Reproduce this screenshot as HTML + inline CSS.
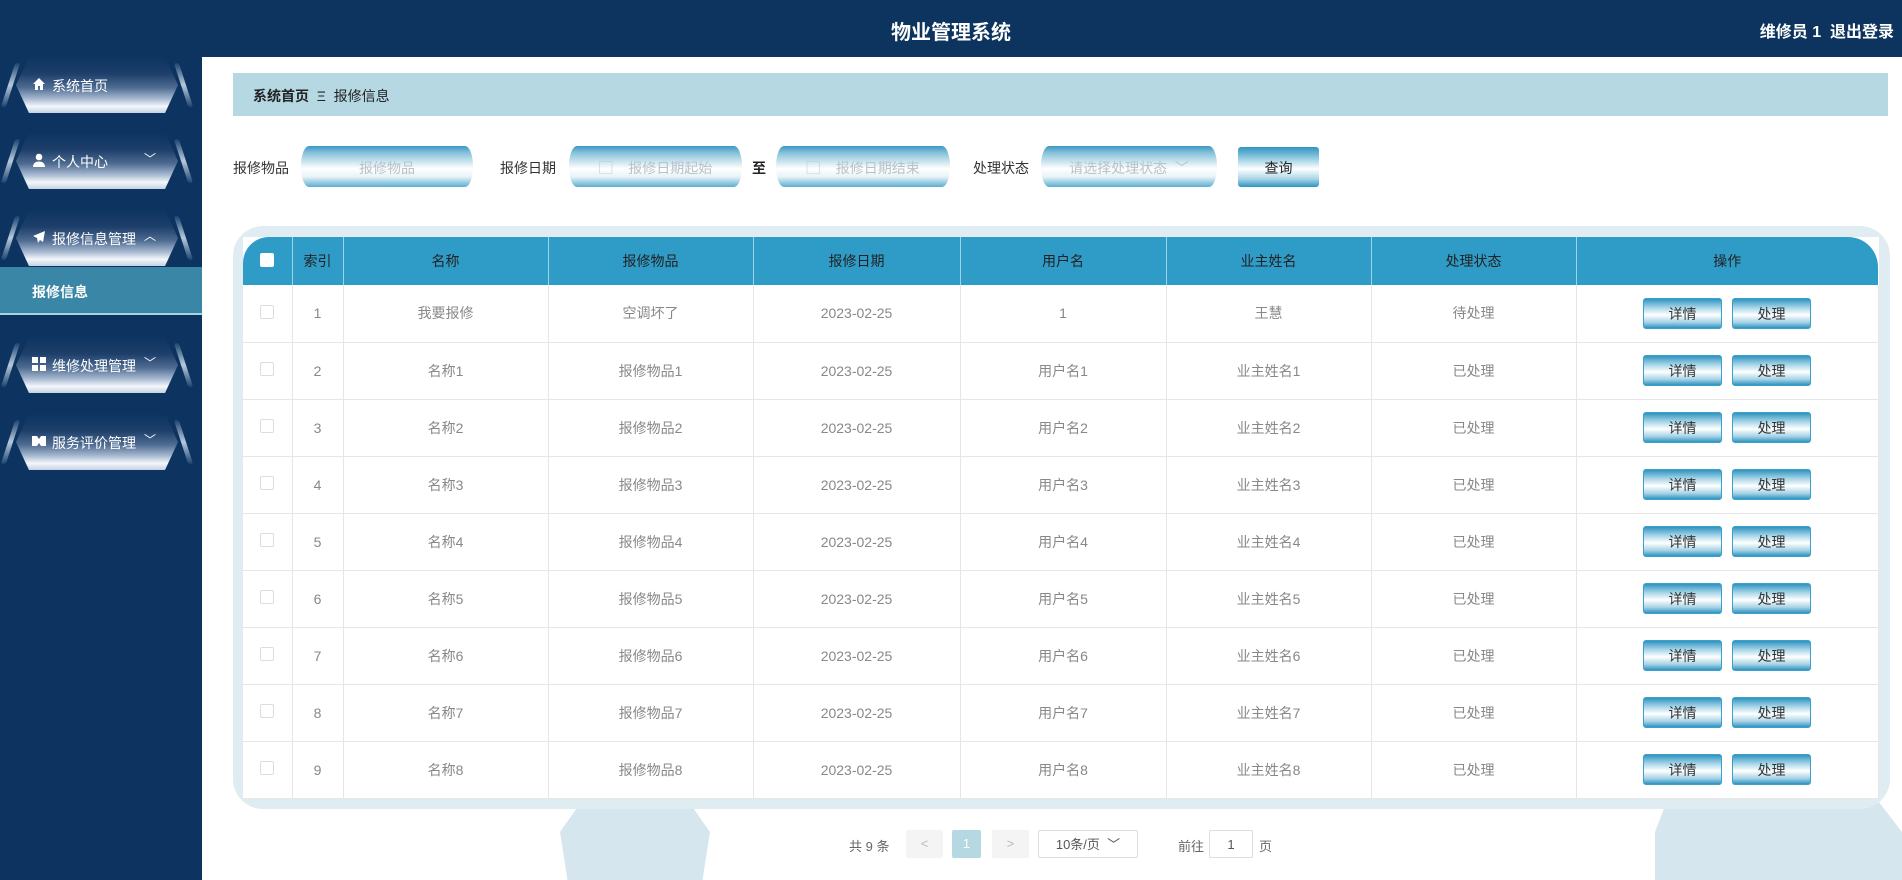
<!DOCTYPE html>
<html><head><meta charset="utf-8">
<style>
*{margin:0;padding:0;box-sizing:border-box}
body{width:1902px;height:880px;overflow:hidden;background:#fff;font-family:"Liberation Sans","Noto Sans CJK SC",sans-serif;position:relative}
.hdr{position:absolute;left:0;top:0;width:1902px;height:57px;background:#0c345e}
.hdr .t{position:absolute;left:0;width:1902px;top:16px;text-align:center;color:#fff;font-weight:bold;font-size:20px}
.hdr .r{position:absolute;right:8px;top:18px;color:#fff;font-weight:bold;font-size:16px}
.side{position:absolute;left:0;top:57px;width:202px;height:823px;background:#0d3461}
.mi{position:absolute;left:6px;width:182px;height:56px}
.mi .b{position:absolute;left:10px;top:0;width:162px;height:56px;clip-path:polygon(8% 0,92% 0,100% 50%,92% 100%,8% 100%,0 50%);background:linear-gradient(180deg,#0d3461 0%,#1d3f6a 30%,#4f6c92 55%,#a9bbd2 75%,#f4f7fb 88%,#c4d2e2 100%)}
.mi .l,.mi .rr{position:absolute;top:6px;width:5px;height:44px;border-radius:3px;background:linear-gradient(180deg,#1d4470,#b8c9dc,#1d4470)}
.mi .l{left:2px;transform:skewX(-18deg)}
.mi .rr{right:2px;transform:skewX(18deg)}
.mi .tx{position:absolute;left:46px;top:19px;color:#fff;font-size:14px}
.mi .ic{position:absolute;left:26px;top:20px;width:14px;height:14px}
.mi .ar{position:absolute;right:32px;top:17px;color:#fff;font-size:12px}
.sub{position:absolute;left:0;top:210px;width:202px;height:48px;background:#3a86a6;border-bottom:2px solid #a9d2e2;color:#fff;font-size:14px;font-weight:bold;padding:15px 0 0 32px}
.bg1{position:absolute;background:#d6e6ee}
.bc{position:absolute;left:233px;top:73px;width:1655px;height:43px;background:#b5d8e2;font-size:14px;padding:13px 0 0 20px;color:#222}
.lab{position:absolute;top:158px;font-size:14px;color:#333}
.inp{position:absolute;top:146px;height:41px;border-radius:8px/20px;background:linear-gradient(180deg,#3a98c4 0%,#8cc4dc 18%,#ffffff 55%,#e8f3f8 75%,#5aaed0 100%);color:#b9c2c8;font-size:14px;text-align:center;padding-top:12px}
.btnq{position:absolute;left:1238px;top:147px;width:81px;height:40px;border-radius:3px;background:linear-gradient(180deg,#2f93c0 0%,#9cd0e4 30%,#fff 55%,#a8d4e6 80%,#2f93c0 100%);font-size:14px;text-align:center;padding-top:11px;color:#222}
.tw{position:absolute;left:233px;top:226px;width:1657px;height:583px;border-radius:30px;background:#dfecf2}
table{position:absolute;left:243px;top:237px;border-collapse:collapse;table-layout:fixed;width:1635px;background:#fff}
th{height:48px;background:#2f9cc8;color:#222;font-weight:normal;font-size:14px;border-right:1px solid #9fd2e6}
td{height:57px;text-align:center;color:#888;font-size:14px;border-right:1px solid #e6e6e6;border-bottom:1px solid #e6e6e6}
.cb{display:inline-block;width:14px;height:14px;border:1px solid #ddd;border-radius:2px;background:#fff}
.ob{display:inline-block;width:79px;height:31px;margin:0 5px;border-radius:3px;background:linear-gradient(180deg,#2f93c0 0%,#a8d6e8 30%,#fff 55%,#a8d4e6 80%,#2f93c0 100%);color:#333;font-size:14px;line-height:31px;border:1px solid #3aa0cc}
.pg{position:absolute;top:830px;font-size:13px;color:#666}
.pb{position:absolute;top:830px;height:28px;border-radius:2px;font-size:13px;text-align:center;line-height:28px}
</style></head><body>
<div class="bg1" style="left:560px;top:800px;width:150px;height:80px;clip-path:polygon(15% 0,85% 0,100% 40%,95% 100%,5% 100%,0 40%)"></div>
<div class="bg1" style="left:1655px;top:800px;width:247px;height:80px;clip-path:polygon(5% 0,90% 0,100% 40%,100% 100%,0 100%,0 40%)"></div>
<div class="hdr"><div class="t">物业管理系统</div><div class="r">维修员 1&nbsp; 退出登录</div></div>
<div class="side">
<div class="mi" style="top:0"><div class="b"></div><div class="l"></div><div class="rr"></div>
<svg class="ic" viewBox="0 0 14 14"><path d="M7 1L1 7h2v6h3V9h2v4h3V7h2z" fill="#fff"/></svg><div class="tx">系统首页</div></div>
<div class="mi" style="top:76px"><div class="b"></div><div class="l"></div><div class="rr"></div>
<svg class="ic" viewBox="0 0 14 14"><circle cx="7" cy="4" r="3.3" fill="#fff"/><path d="M1 14c0-4 3-5.5 6-5.5s6 1.5 6 5.5z" fill="#fff"/></svg><div class="tx">个人中心</div><div class="ar">﹀</div></div>
<div class="mi" style="top:153px"><div class="b"></div><div class="l"></div><div class="rr"></div>
<svg class="ic" viewBox="0 0 14 14"><path d="M13 1L1 6l4 2 1 5 2-3 3 2z" fill="#fff"/></svg><div class="tx">报修信息管理</div><div class="ar">︿</div></div>
<div class="sub">报修信息</div>
<div class="mi" style="top:280px"><div class="b"></div><div class="l"></div><div class="rr"></div>
<svg class="ic" viewBox="0 0 14 14"><rect x="0" y="0" width="6" height="6" fill="#fff"/><rect x="8" y="0" width="6" height="6" fill="#fff"/><rect x="0" y="8" width="6" height="6" fill="#fff"/><rect x="8" y="8" width="6" height="6" fill="#fff"/></svg><div class="tx">维修处理管理</div><div class="ar">﹀</div></div>
<div class="mi" style="top:357px"><div class="b"></div><div class="l"></div><div class="rr"></div>
<svg class="ic" viewBox="0 0 14 14"><path d="M0 2h5l2 3 2-3h5v10H9L7 9l-2 3H0z" fill="#fff"/></svg><div class="tx">服务评价管理</div><div class="ar">﹀</div></div>
</div>
<div class="bc"><b>系统首页</b>&nbsp; Ξ&nbsp; 报修信息</div>
<div class="lab" style="left:233px">报修物品</div>
<div class="inp" style="left:301px;width:172px">报修物品</div>
<div class="lab" style="left:500px">报修日期</div>
<div class="inp" style="left:569px;width:173px">▢ &nbsp;&nbsp;&nbsp;报修日期起始</div>
<div class="lab" style="left:752px;font-weight:bold;color:#222">至</div>
<div class="inp" style="left:776px;width:174px">▢ &nbsp;&nbsp;&nbsp;报修日期结束</div>
<div class="lab" style="left:973px">处理状态</div>
<div class="inp" style="left:1041px;width:176px">请选择处理状态 &nbsp;﹀</div>
<div class="btnq">查询</div>
<div class="tw"></div>
<table>
<colgroup><col style="width:49px"><col style="width:51px"><col style="width:205px"><col style="width:205px"><col style="width:207px"><col style="width:206px"><col style="width:205px"><col style="width:205px"><col style="width:302px"></colgroup>
<tr><th style="border-top-left-radius:26px"><span class="cb" style="border:none"></span></th><th>索引</th><th>名称</th><th>报修物品</th><th>报修日期</th><th>用户名</th><th>业主姓名</th><th>处理状态</th><th style="border-top-right-radius:30px;border-right:none">操作</th></tr>
<tr><td><span class="cb"></span></td><td>1</td><td>我要报修</td><td>空调坏了</td><td>2023-02-25</td><td>1</td><td>王慧</td><td>待处理</td><td><span class="ob">详情</span><span class="ob">处理</span></td></tr>
<tr><td><span class="cb"></span></td><td>2</td><td>名称1</td><td>报修物品1</td><td>2023-02-25</td><td>用户名1</td><td>业主姓名1</td><td>已处理</td><td><span class="ob">详情</span><span class="ob">处理</span></td></tr>
<tr><td><span class="cb"></span></td><td>3</td><td>名称2</td><td>报修物品2</td><td>2023-02-25</td><td>用户名2</td><td>业主姓名2</td><td>已处理</td><td><span class="ob">详情</span><span class="ob">处理</span></td></tr>
<tr><td><span class="cb"></span></td><td>4</td><td>名称3</td><td>报修物品3</td><td>2023-02-25</td><td>用户名3</td><td>业主姓名3</td><td>已处理</td><td><span class="ob">详情</span><span class="ob">处理</span></td></tr>
<tr><td><span class="cb"></span></td><td>5</td><td>名称4</td><td>报修物品4</td><td>2023-02-25</td><td>用户名4</td><td>业主姓名4</td><td>已处理</td><td><span class="ob">详情</span><span class="ob">处理</span></td></tr>
<tr><td><span class="cb"></span></td><td>6</td><td>名称5</td><td>报修物品5</td><td>2023-02-25</td><td>用户名5</td><td>业主姓名5</td><td>已处理</td><td><span class="ob">详情</span><span class="ob">处理</span></td></tr>
<tr><td><span class="cb"></span></td><td>7</td><td>名称6</td><td>报修物品6</td><td>2023-02-25</td><td>用户名6</td><td>业主姓名6</td><td>已处理</td><td><span class="ob">详情</span><span class="ob">处理</span></td></tr>
<tr><td><span class="cb"></span></td><td>8</td><td>名称7</td><td>报修物品7</td><td>2023-02-25</td><td>用户名7</td><td>业主姓名7</td><td>已处理</td><td><span class="ob">详情</span><span class="ob">处理</span></td></tr>
<tr><td><span class="cb"></span></td><td>9</td><td>名称8</td><td>报修物品8</td><td>2023-02-25</td><td>用户名8</td><td>业主姓名8</td><td>已处理</td><td><span class="ob">详情</span><span class="ob">处理</span></td></tr>
</table>
<div class="pg" style="left:849px;top:836px">共 9 条</div>
<div class="pb" style="left:906px;width:37px;background:#f4f4f5;color:#bbb">&lt;</div>
<div class="pb" style="left:952px;width:29px;background:#b5d8e2;color:#fff">1</div>
<div class="pb" style="left:992px;width:37px;background:#f4f4f5;color:#bbb">&gt;</div>
<div class="pb" style="left:1038px;width:100px;border:1px solid #dcdfe6;color:#555;background:#fff">10条/页 &nbsp;﹀</div>
<div class="pg" style="left:1178px;top:836px">前往</div>
<div class="pb" style="left:1209px;width:44px;border:1px solid #dcdfe6;color:#555;background:#fff">1</div>
<div class="pg" style="left:1259px;top:836px">页</div>
</body></html>
